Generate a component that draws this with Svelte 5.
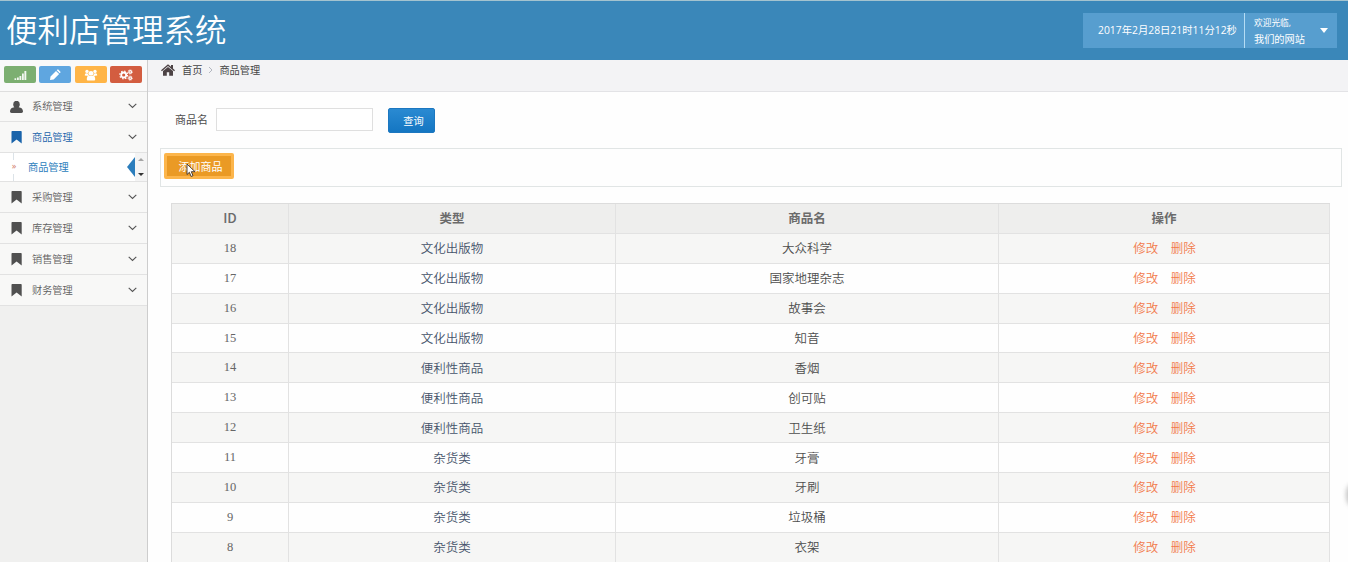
<script lang="ts">
	type MenuItem = {
		label: string;
		icon: string;
		height: number;
		open?: boolean;
	};

	const person = 'M3.200 3.400a3.300 3.600 0 1 1 6.600 0c0 1.200-.5 2.200-1.100 2.800C11.500 6.500 13 8 13 10.600c0 .9-.6 1.400-1.600 1.400H1.600C.6 12 0 11.500 0 10.600 0 8 1.500 6.500 4.300 6.200 3.700 5.600 3.200 4.600 3.200 3.400z';
	const bookmark = 'M2.200 0h8.800c.4 0 .7.300.7.700V12.500L6.600 8.600 1.500 12.500V.7C1.500.3 1.800 0 2.200 0z';

	const topItems: MenuItem[] = [
		{ label: '系统管理', icon: person, height: 30 },
		{ label: '商品管理', icon: bookmark, height: 31, open: true }
	];

	const restItems: MenuItem[] = [
		{ label: '采购管理', icon: bookmark, height: 31 },
		{ label: '库存管理', icon: bookmark, height: 31 },
		{ label: '销售管理', icon: bookmark, height: 31 },
		{ label: '财务管理', icon: bookmark, height: 31 }
	];

	const goods = [
		{ id: 18, type: '文化出版物', name: '大众科学' },
		{ id: 17, type: '文化出版物', name: '国家地理杂志' },
		{ id: 16, type: '文化出版物', name: '故事会' },
		{ id: 15, type: '文化出版物', name: '知音' },
		{ id: 14, type: '便利性商品', name: '香烟' },
		{ id: 13, type: '便利性商品', name: '创可贴' },
		{ id: 12, type: '便利性商品', name: '卫生纸' },
		{ id: 11, type: '杂货类', name: '牙膏' },
		{ id: 10, type: '杂货类', name: '牙刷' },
		{ id: 9, type: '杂货类', name: '垃圾桶' },
		{ id: 8, type: '杂货类', name: '衣架' }
	];

	let keyword = $state('');
</script>

{#snippet menuRow(item: MenuItem)}
	<a class="menu-item" class:open={item.open} href="#menu" style={`height:${item.height}px`}>
		<svg class="menu-icon" width="13" height="13" viewBox="0 0 13 13">
			<path d={item.icon} fill="currentColor" />
		</svg>
		<span>{item.label}</span>
		<svg class="arrow" width="9" height="6" viewBox="0 0 9 6">
			<path d="M.7.8 4.500 4.500 8.300.8" fill="none" stroke="#555" stroke-width="1.100" />
		</svg>
	</a>
{/snippet}

<div class="app">
	<header>
		<h1>便利店管理系统</h1>
		<div class="nav-user">
			<div class="clock">2017年2月28日21时11分12秒</div>
			<div class="welcome">
				<div>
					<small>欢迎光临,</small>
					<span>我们的网站</span>
				</div>
				<i class="caret"></i>
			</div>
		</div>
	</header>

	<div class="body">
		<aside>
			<div class="shortcuts">
				<button class="green" aria-label="统计">
					<svg width="14" height="12" viewBox="0 0 14 12">
						<path d="M1.500 9.300h1.700V11H1.500zM4 8.500h1.800V11H4zM6.500 7h1.800v4H6.500zM9 4.500h1.800V11H9zM11.400 2h1.900v9h-1.900z" fill="#fff" opacity=".9" />
					</svg>
				</button>
				<button class="blue" aria-label="编辑">
					<svg width="12" height="12" viewBox="0 0 12 12">
						<path d="M1 11l.5-3.600L7 1.900l3.100 3.100-5.500 5.500zM7.700 1.300l.7-.7c.3-.3.600-.3.900 0l2.100 2.100c.3.300.3.600 0 .9l-.7.700z" fill="#fff" />
					</svg>
				</button>
				<button class="yellow" aria-label="用户">
					<svg width="14" height="12" viewBox="0 0 14 12" fill="#fff">
						<circle cx="3" cy="2.400" r="1.700" />
						<circle cx="11" cy="2.400" r="1.700" />
						<circle cx="7" cy="4.300" r="2.400" />
						<path d="M.8 6.600C.8 5 1.500 4.200 2.500 4.300l1.800.4c0 1.100.3 1.700.8 2.200zM13.200 6.600c0-1.600-.7-2.400-1.700-2.300l-1.800.4c0 1.100-.3 1.700-.8 2.200zM2.800 10.200c0-2.300.8-3.700 2.400-3.700 1 .8 2.600.8 3.600 0 1.600 0 2.400 1.400 2.400 3.700 0 .8-.5 1.300-1.300 1.300H4.100c-.8 0-1.300-.5-1.300-1.300z" />
					</svg>
				</button>
				<button class="red" aria-label="设置">
					<svg width="14" height="12" viewBox="0 0 14 12" fill="none" stroke="#fff">
						<circle cx="4.700" cy="6" r="2.500" stroke-width="1.800" />
						<circle cx="4.700" cy="6" r="3.900" stroke-width="1.200" stroke-dasharray="1.500 1.563" />
						<circle cx="11.200" cy="2.900" r="1.300" stroke-width="1.200" />
						<circle cx="11.200" cy="2.900" r="2.200" stroke-width=".7" stroke-dasharray="1 .73" />
						<circle cx="11.200" cy="9.100" r="1.300" stroke-width="1.200" />
						<circle cx="11.200" cy="9.100" r="2.200" stroke-width=".7" stroke-dasharray="1 .73" />
					</svg>
				</button>
			</div>

			<nav>
				{#each topItems as item}
					{@render menuRow(item)}
				{/each}
				<div class="submenu">
					<span class="guide"><b>»</b></span>
					<a href="#goods">商品管理</a>
					<i class="marker"></i>
					<div class="spinner">
						<i class="up"></i>
						<i class="down"></i>
					</div>
				</div>
				{#each restItems as item}
					{@render menuRow(item)}
				{/each}
			</nav>
		</aside>

		<main>
			<div class="breadcrumb">
				<svg width="14" height="12" viewBox="0 0 14 12" fill="#4c4244">
					<path d="M7 .2 0 6.200l.9 1L7 2l6.100 5.200.9-1-2-1.700V1h-2v1.800z" />
					<path d="M7 2.900 2 7.100V11.800h3.800V8.200h2.400v3.600H12V7.100z" />
				</svg>
				<span class="home">首页</span>
				<svg class="sep" width="5" height="8" viewBox="0 0 5 8">
					<path d="M1 1l3 3-3 3" fill="none" stroke="#b2b6bf" />
				</svg>
				<span>商品管理</span>
			</div>

			<form class="search">
				<label for="keyword">商品名</label>
				<input id="keyword" type="text" bind:value={keyword} />
				<button type="button">查询</button>
			</form>

			<div class="toolbar">
				<button type="button">添加商品</button>
				<svg class="cursor" width="10" height="15" viewBox="0 0 10 15">
					<path d="M1 1v10.500l2.400-2.200 1.700 4.200 1.900-.8-1.700-4H9z" fill="#fff" stroke="#3c3027" stroke-width=".9" />
				</svg>
			</div>

			<div class="table">
				<div class="row head">
					<div class="id">ID</div>
					<div>类型</div>
					<div>商品名</div>
					<div>操作</div>
				</div>
				{#each goods as item}
					<div class="row">
						<div class="num">{item.id}</div>
						<div class="type">{item.type}</div>
						<div>{item.name}</div>
						<div class="actions">
							<a href="#edit">修改</a>
							<a href="#delete">删除</a>
						</div>
					</div>
				{/each}
			</div>
			<i class="edge-dot"></i>
		</main>
	</div>
</div>

<style>
	:global(body) {
		overflow: hidden;
	}

	.app {
		display: flex;
		flex-direction: column;
		height: 562px;
		overflow: hidden;
		box-sizing: border-box;
		background: #fefefe;
		color: #4d4d4d;
		font-family: "Open Sans", "Noto Sans CJK SC", sans-serif;
		font-size: 10.2px;
	}

	.app * {
		box-sizing: border-box;
	}

	a {
		color: inherit;
		text-decoration: none;
	}

	button {
		border: 0;
		padding: 0;
		font-family: inherit;
		color: #fff;
	}

	svg {
		display: block;
		flex: none;
	}

	header {
		display: flex;
		justify-content: space-between;
		align-items: flex-start;
		flex: none;
		height: 60px;
		padding: 0 11px 0 6px;
		background: #3a87b9;
		border-top: 1px solid #a4c3cf;
	}

	h1 {
		margin: 0;
		font-size: 31.5px;
		font-weight: 350;
		line-height: 55px;
		font-family: "Noto Sans CJK SC", sans-serif;
		color: #fff;
	}

	.nav-user {
		display: flex;
		height: 35px;
		margin-top: 12px;
		color: #fff;
	}

	.clock {
		width: 162px;
		padding-left: 15px;
		line-height: 35px;
		font-size: 10.35px;
		white-space: nowrap;
		background: #579ecf;
		border-right: 1px solid #b5dcf4;
	}

	.welcome {
		display: flex;
		justify-content: space-between;
		align-items: center;
		width: 92px;
		padding: 0 9px 0 9px;
		background: #579ecf;
	}

	.welcome small,
	.welcome span {
		display: block;
		white-space: nowrap;
		line-height: 16px;
	}

	.welcome small {
		font-size: 8.7px;
	}

	.caret {
		border: 4.5px solid transparent;
		border-top: 5px solid #fff;
		border-bottom: 0;
	}

	.body {
		display: flex;
		flex: 1;
		min-height: 0;
	}

	aside {
		flex: none;
		width: 148px;
		background: #f0f0ef;
		border-right: 1px solid #cdcdcd;
	}

	.shortcuts {
		display: flex;
		gap: 3.4px;
		height: 32px;
		padding: 6px 4px 0;
		background: #f9f9f9;
		border-bottom: 1px solid #dedede;
	}

	.shortcuts button {
		display: flex;
		justify-content: center;
		align-items: center;
		width: 32px;
		height: 17px;
		border-radius: 2px;
	}

	.green {
		background: #7caf71;
	}

	.blue {
		background: #5fa6e0;
	}

	.yellow {
		background: #ffb547;
	}

	.red {
		background: #d35d40;
	}

	.menu-item {
		display: flex;
		align-items: center;
		padding: 0 10px 1px;
		background: #f8f8f7;
		border-bottom: 1px solid #e2e2e2;
		color: #606060;
	}

	.menu-item span {
		margin-left: 9px;
		padding-bottom: 1px;
		font-weight: 350;
	}

	.menu-item .arrow {
		margin-left: auto;
	}

	.menu-icon {
		position: relative;
		top: 1px;
		color: #505050;
	}

	.open .menu-icon,
	.open span {
		color: #1963aa;
	}

	.submenu {
		display: flex;
		align-items: center;
		height: 29px;
		background: #fff;
		border-bottom: 1px solid #e2e2e2;
		color: #2b7dbc;
	}

	.guide {
		display: flex;
		justify-content: center;
		width: 28px;
		height: 28px;
		background: linear-gradient(#dce3e8, #dce3e8) 13px 0 / 1px 100% no-repeat;
	}

	.guide b {
		height: 14px;
		margin-top: 7px;
		line-height: 12px;
		font-size: 9px;
		font-weight: 400;
		background: #fff;
		color: #cf7a69;
	}

	.submenu a {
		padding-bottom: 1px;
	}

	.marker {
		margin-left: auto;
		border: 10px solid transparent;
		border-right: 8px solid #2b7dbc;
		border-left: 0;
	}

	.spinner {
		display: flex;
		flex-direction: column;
		justify-content: space-between;
		align-items: center;
		width: 12px;
		height: 28px;
		padding: 5px 0;
		background: #f4f4f4;
	}

	.up {
		border: 3px solid transparent;
		border-bottom: 3px solid #a5a5a5;
		border-top: 0;
	}

	.down {
		border: 3px solid transparent;
		border-top: 3px solid #333;
		border-bottom: 0;
	}

	main {
		position: relative;
		flex: 1;
		min-width: 0;
	}

	.breadcrumb {
		display: flex;
		align-items: center;
		height: 32px;
		padding: 0 0 12px 13px;
		background: #f3f3f5;
		border-bottom: 1px solid #e3e3e6;
		color: #454545;
	}

	.home {
		margin-left: 7px;
	}

	.sep {
		margin: 0 6px 0 6px;
	}

	.search {
		display: flex;
		align-items: center;
		height: 56px;
		padding-left: 27px;
	}

	.search label {
		width: 41px;
		padding-bottom: 2px;
		font-size: 11px;
	}

	.search input {
		width: 157px;
		height: 23px;
		margin-bottom: 1px;
		border: 1px solid #dfdfdf;
		background: #fff;
	}

	.search button {
		width: 47px;
		height: 25px;
		margin-left: 15px;
		padding: 1px 0 0 4px;
		border: 1px solid #1c77c0;
		border-radius: 2px;
		background: linear-gradient(#2a8ad2, #1476c2);
		font-size: 10.2px;
	}

	.toolbar {
		position: relative;
		height: 39px;
		margin: 0 6px 0 12px;
		padding: 4px 0 0 3px;
		border: 1px solid #e1e5e5;
	}

	.toolbar button {
		display: block;
		width: 70px;
		height: 26px;
		padding: 0 0 0 3px;
		border: 3px solid #fcb54b;
		border-radius: 2px;
		background: #ea9a25;
		font-size: 11px;
	}

	.cursor {
		position: absolute;
		left: 25px;
		top: 14px;
	}

	.table {
		width: 1159px;
		margin: 16px 0 0 23px;
		border: 1px solid #dcdcdc;
		border-width: 1px 0 0 1px;
		font-size: 12.5px;
		font-family: "Liberation Serif", "Noto Sans CJK SC", serif;
	}

	.row {
		display: grid;
		grid-template-columns: 117px 327px 383px 331px;
		height: 29.9px;
	}

	.row > div {
		display: flex;
		justify-content: center;
		align-items: center;
		padding-bottom: 1px;
		border: 1px solid #e2e2e2;
		border-width: 0 1px 1px 0;
		font-weight: 350;
	}

	.row:nth-child(even) {
		background: #f6f6f5;
	}

	.row.head {
		background: #eeeeed;
		color: #6b6b6b;
	}

	.row.head > div {
		font-family: "Open Sans", "Noto Sans CJK SC", sans-serif;
		font-weight: 700;
	}

	.row.head > .id {
		padding-bottom: 2px;
		font-family: "Noto Sans CJK SC", sans-serif;
		font-size: 13.5px;
		font-weight: 500;
	}

	.row .num {
		padding-bottom: 0;
		color: #666;
	}

	.row .type {
		color: #45536a;
	}

	.row .actions {
		gap: 12.5px;
		padding-left: 1px;
		color: #f27a4b;
	}

	.edge-dot {
		position: absolute;
		right: -9px;
		top: 424px;
		width: 11px;
		height: 22px;
		border-radius: 50%;
		background: #c4c4c4;
		filter: blur(2px);
	}
</style>
